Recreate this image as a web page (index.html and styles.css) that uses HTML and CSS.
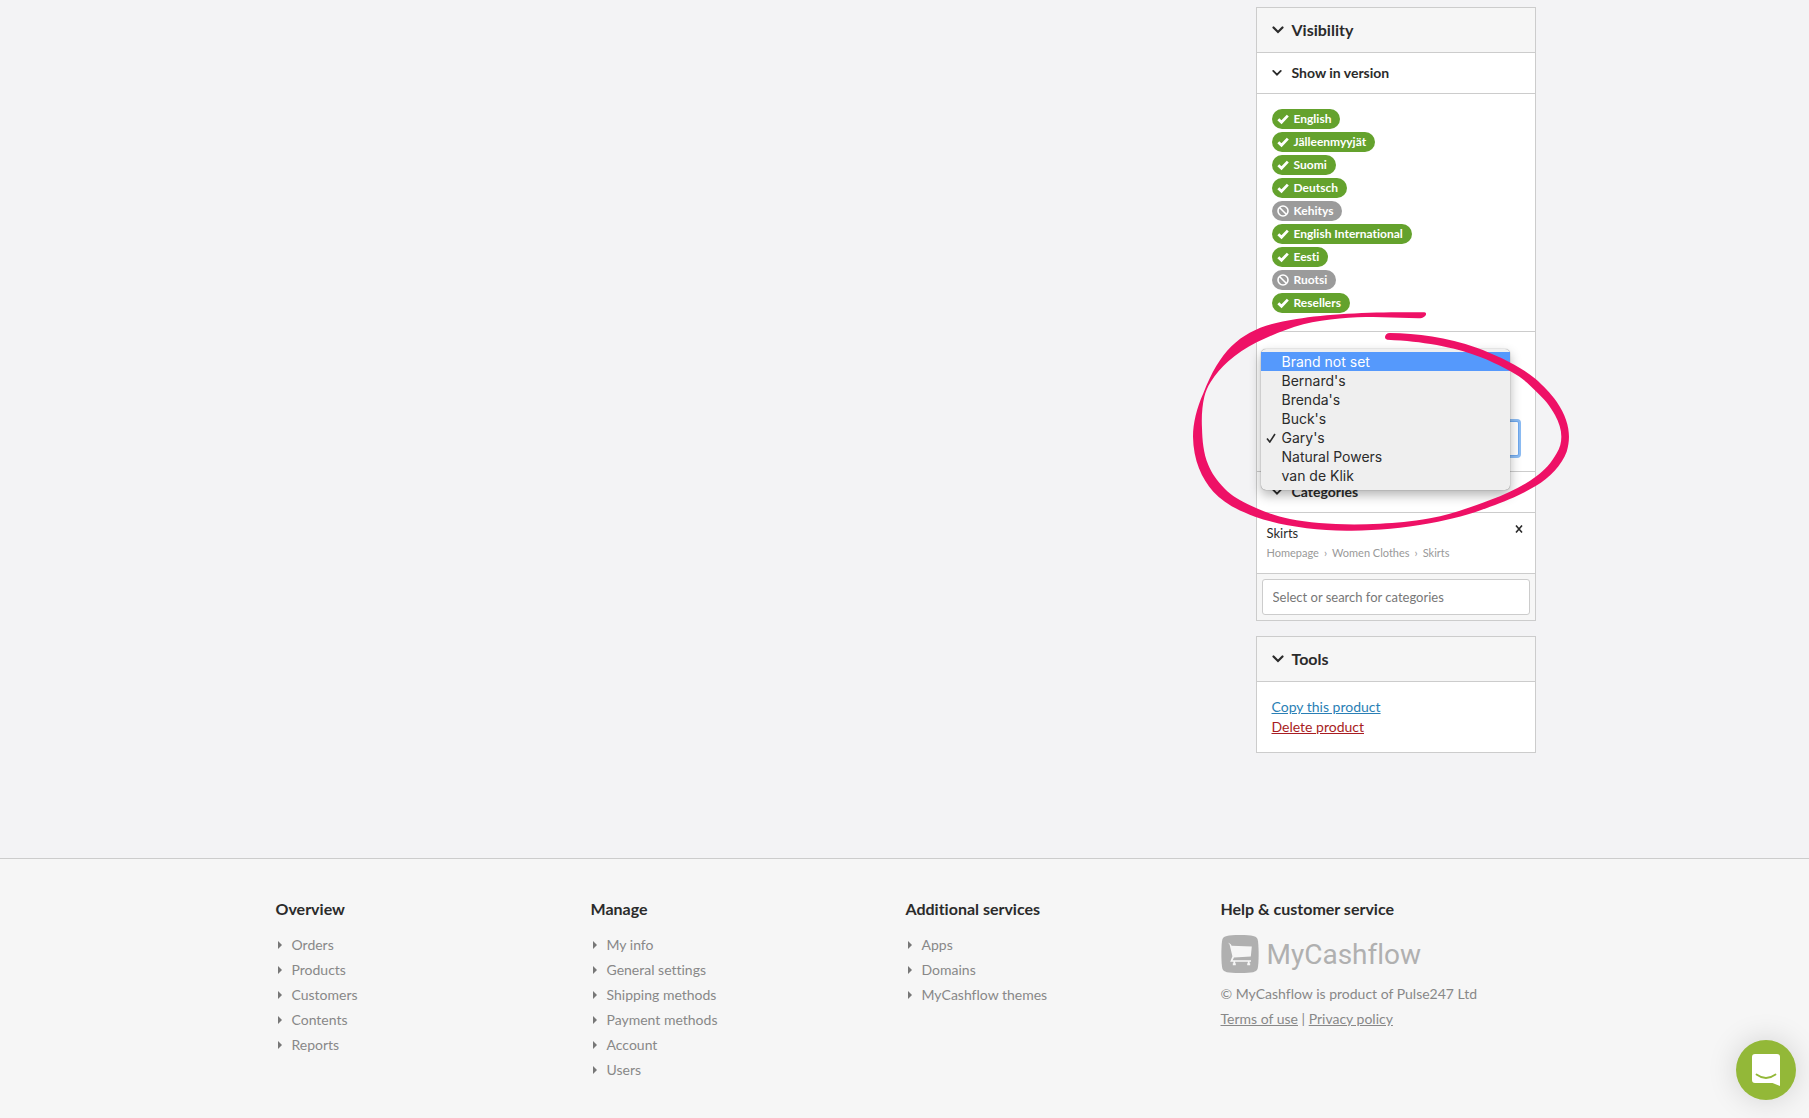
FILE: index.html
```
<!DOCTYPE html>
<html lang="en">

<head>
  <meta charset="utf-8">
  <title>MyCashflow</title>
  <link rel="stylesheet" href="styles.css">
</head>

<body>
  <svg class="sprite" aria-hidden="true">
    <symbol id="chevron" viewBox="0 0 12 8">
      <path d="M1.500 1.500 6 6l4.500-4.500" fill="none" stroke="currentColor" stroke-width="2.200" stroke-linecap="round" />
    </symbol>
    <symbol id="check" viewBox="0 0 12 10">
      <path d="M1.300 5.200 4.500 8.200 10.800 1.600" fill="none" stroke="currentColor" stroke-width="2.800" />
    </symbol>
    <symbol id="ban" viewBox="0 0 12 12">
      <circle cx="6" cy="6" r="5" fill="none" stroke="currentColor" stroke-width="1.600" />
      <path d="M2.500 2.500l7 7" stroke="currentColor" stroke-width="1.600" />
    </symbol>
  </svg>

  <main class="page">
    <aside class="sidebar">
      <section class="panel">
        <h2 class="panel-title"><button type="button"><svg class="chevron"><use href="#chevron" /></svg>Visibility</button></h2>
        <h3 class="panel-subtitle"><button type="button"><svg class="chevron small"><use href="#chevron" /></svg>Show in version</button></h3>
        <ul class="versions">
          <li class="pill"><svg class="check"><use href="#check" /></svg>English</li>
          <li class="pill"><svg class="check"><use href="#check" /></svg>Jälleenmyyjät</li>
          <li class="pill"><svg class="check"><use href="#check" /></svg>Suomi</li>
          <li class="pill"><svg class="check"><use href="#check" /></svg>Deutsch</li>
          <li class="pill off"><svg class="ban"><use href="#ban" /></svg>Kehitys</li>
          <li class="pill"><svg class="check"><use href="#check" /></svg>English International</li>
          <li class="pill"><svg class="check"><use href="#check" /></svg>Eesti</li>
          <li class="pill off"><svg class="ban"><use href="#ban" /></svg>Ruotsi</li>
          <li class="pill"><svg class="check"><use href="#check" /></svg>Resellers</li>
        </ul>

        <div class="brand">
          <select class="brand-select" aria-label="Brand">
            <option>Gary's</option>
          </select>
          <ul class="menu" role="listbox" aria-label="Brand">
            <li class="active" role="option">Brand not set</li>
            <li role="option">Bernard's</li>
            <li role="option">Brenda's</li>
            <li role="option">Buck's</li>
            <li role="option" aria-selected="true"><svg class="tick" viewBox="0 0 10 10"><path d="M1 5.500 3.800 9 9 1" fill="none" stroke="currentColor" stroke-width="1.600" /></svg>Gary's</li>
            <li role="option">Natural Powers</li>
            <li role="option">van de Klik</li>
          </ul>
          <!-- hand-drawn ring around the menu -->
          <svg class="ring" viewBox="0 0 1200 720" aria-hidden="true">
            <path d="M733 37C600 35 450 40 350 57C205 78 130 125 70 280C50 325 39 370 39 410C40 480 65 535 100 575C130 608 175 632 225 650C300 677 400 692 500 692C590 693 660 685 750 670C820 657 880 640 930 620C985 600 1025 583 1067 558C1110 533 1145 495 1160 455C1174 410 1168 360 1130 305C1110 277 1090 258 1067 237C1020 198 950 165 890 143C800 112 710 100 630 99C614 99 610 117 622 119C680 122 720 126 770 135C820 145 850 153 890 167C930 181 960 197 990 213C1025 232 1045 250 1067 273C1095 299 1110 318 1125 345C1137 368 1144 388 1144 410C1144 428 1140 443 1130 460C1115 487 1095 511 1067 530C1030 558 985 580 930 600C880 618 820 642 750 655C690 665 650 669 600 671C490 677 400 670 330 657C285 647 250 635 215 618C180 602 155 587 135 567C110 541 95 520 85 495C70 460 67 420 66 385C64 350 67 315 73 290C77 275 82 262 92 246C107 223 124 203 145 184C170 162 198 143 230 127C275 105 320 87 370 73C440 55 520 51 580 51L715 55C735 56 745 39 733 37Z" fill="#ee1166" />
          </svg>
        </div>

        <h3 class="panel-subtitle"><button type="button"><svg class="chevron small"><use href="#chevron" /></svg>Categories</button></h3>
        <div class="category">
          <div>
            <p class="category-name">Skirts</p>
            <p class="category-path"><span>Homepage</span><span>›</span><span>Women Clothes</span><span>›</span><span>Skirts</span></p>
          </div>
          <button type="button" class="remove" aria-label="Remove">
            <svg viewBox="0 0 8 8"><path d="M1 .5l6 7M7 .5l-6 7" stroke="currentColor" stroke-width="1.600" /></svg>
          </button>
        </div>
        <div class="category-search">
          <input type="text" placeholder="Select or search for categories" aria-label="Select or search for categories">
        </div>
      </section>

      <section class="panel">
        <h2 class="panel-title"><button type="button"><svg class="chevron"><use href="#chevron" /></svg>Tools</button></h2>
        <div class="tools">
          <a href="#">Copy this product</a>
          <a href="#" class="danger">Delete product</a>
        </div>
      </section>
    </aside>
  </main>

  <footer class="footer">
    <div class="footer-inner">
      <nav>
        <h4>Overview</h4>
        <ul>
          <li><a href="#">Orders</a></li>
          <li><a href="#">Products</a></li>
          <li><a href="#">Customers</a></li>
          <li><a href="#">Contents</a></li>
          <li><a href="#">Reports</a></li>
        </ul>
      </nav>
      <nav>
        <h4>Manage</h4>
        <ul>
          <li><a href="#">My info</a></li>
          <li><a href="#">General settings</a></li>
          <li><a href="#">Shipping methods</a></li>
          <li><a href="#">Payment methods</a></li>
          <li><a href="#">Account</a></li>
          <li><a href="#">Users</a></li>
        </ul>
      </nav>
      <nav>
        <h4>Additional services</h4>
        <ul>
          <li><a href="#">Apps</a></li>
          <li><a href="#">Domains</a></li>
          <li><a href="#">MyCashflow themes</a></li>
        </ul>
      </nav>
      <div class="help">
        <h4>Help &amp; customer service</h4>
        <div class="logo">
          <svg viewBox="0 0 38 38">
            <path d="M19 0C32 0 35 1 36.500 4C38 8 38 30 36.500 34C35 37 32 38 19 38S3 37 1.500 34C0 30 0 8 1.500 4C3 1 6 0 19 0Z" fill="#b0b0b0" />
            <path d="M7 7.500 9.800 9.300 10.600 10.800 30.800 11.600 29.800 21.600 13 22.400 11.600 25.200H30V26.800H28.600V28.300H29.200V30.300H26.200V28.300H26.800V26.800H14.200V28.300H14.800V30.300H11.800V28.300H12.400V26.800H9.200L11.400 21.200 8.600 9.600Z" fill="#f6f6f6" />
          </svg>
          <span>MyCashflow</span>
        </div>
        <p>© MyCashflow is product of Pulse247 Ltd</p>
        <p><a href="#">Terms of use</a> | <a href="#">Privacy policy</a></p>
      </div>
    </div>
  </footer>

  <button type="button" class="chat" aria-label="Chat">
    <svg viewBox="0 0 28 32">
      <path d="M3 0H25Q28 0 28 3V32L20.500 29H3Q0 29 0 26V3Q0 0 3 0Z" fill="#fff" />
      <path d="M4.500 20.500Q14 27.500 23.500 20.500" fill="none" stroke="#93b838" stroke-width="1.800" stroke-linecap="round" />
    </svg>
  </button>
</body>

</html>
```
FILE: styles.css
```
* {
  box-sizing: border-box;
}

body {
  margin: 0;
  min-height: 100vh;
  display: flex;
  flex-direction: column;
  background: #f3f3f5;
  color: #2b2b2b;
  font-family: Lato, sans-serif;
  font-size: 14px;
  font-variant-ligatures: none;
  line-height: 20px;
}

h2,
h3,
h4,
p,
ul {
  margin: 0;
  padding: 0;
}

ul {
  list-style: none;
}

button {
  font: inherit;
  color: inherit;
  background: none;
  border: 0;
  padding: 0;
  cursor: pointer;
}

.sprite {
  display: none;
}

.page {
  width: 100%;
  max-width: 1262px;
  margin: 0 auto;
  padding: 7px 0 105px;
  display: flex;
  justify-content: flex-end;
}

.sidebar {
  width: 280px;
  display: flex;
  flex-direction: column;
  gap: 15px;
}

.panel {
  background: #fff;
  border: 1px solid #ccc;
}

.panel-title,
.panel-subtitle {
  border-bottom: 1px solid #ccc;
  font-weight: 700;
}

.panel-title {
  background: #f6f6f6;
  font-size: 16px;
}

.panel-subtitle {
  font-size: 14px;
}

.panel-title button,
.panel-subtitle button {
  width: 100%;
  padding: 10px 15px;
  display: flex;
  align-items: center;
  text-align: left;
}

.panel-title button {
  padding: 12px 15px;
}

.chevron {
  width: 12px;
  height: 8px;
  margin-right: 8px;
}

.chevron.small {
  width: 10px;
  margin-right: 10px;
}

.versions {
  padding: 15px 15px 18px;
  display: flex;
  flex-direction: column;
  align-items: flex-start;
  gap: 3px;
  border-bottom: 1px solid #ccc;
}

.pill {
  display: flex;
  align-items: center;
  gap: 5px;
  height: 20px;
  padding: 0 9px 0 5px;
  border-radius: 10px;
  background: #64a22d;
  color: #fff;
  font-size: 12px;
  font-weight: 700;
}

.pill.off {
  background: #9b9b9b;
}

.pill svg {
  width: 12px;
  height: 12px;
}

.brand {
  position: relative;
  height: 140px;
  padding: 15px 16px;
  display: flex;
  align-items: flex-end;
  border-bottom: 1px solid #ccc;
}

.brand-select {
  width: 100%;
  height: 35px;
  padding: 0 8px;
  appearance: none;
  border: 1px solid #6ea8ee;
  border-radius: 2px;
  box-shadow: 0 0 0 2px #8cbcf3;
  background: #fff;
  color: inherit;
  font: inherit;
}

.menu {
  position: absolute;
  top: 17px;
  left: 4px;
  right: 25px;
  z-index: 1;
  padding: 3px 0 5px;
  border-radius: 5px;
  background: #efefef;
  box-shadow: 0 0 1px rgba(0, 0, 0, 0.6), 0 5px 12px rgba(0, 0, 0, 0.3);
  font-family: Inter, sans-serif;
  font-size: 14px;
  line-height: 19px;
}

.menu li {
  position: relative;
  padding-left: 21px;
}

.menu .active {
  background: #5599fc;
  color: #fff;
}

.tick {
  position: absolute;
  left: 5px;
  top: 5px;
  width: 10px;
  height: 10px;
}

.ring {
  position: absolute;
  z-index: 2;
  left: -77px;
  top: -32px;
  width: 400px;
  height: 240px;
  pointer-events: none;
}

.category {
  display: flex;
  justify-content: space-between;
  padding: 10px;
  border-bottom: 1px solid #ccc;
}

.category-name {
  font-size: 13px;
}

.category-path {
  display: flex;
  gap: 5px;
  color: #999;
  font-size: 11px;
}

.remove {
  align-self: flex-start;
  width: 12px;
  height: 12px;
}

.remove svg {
  display: block;
  width: 8px;
  height: 8px;
  margin: 0 2px;
}

.category-search {
  padding: 5px;
  background: #f6f6f6;
}

.category-search input {
  display: block;
  width: 100%;
  height: 36px;
  padding: 0 10px;
  border: 1px solid #ccc;
  border-radius: 3px;
  background: #fff;
  font: inherit;
  font-size: 13px;
}

.category-search input::placeholder {
  color: #777;
}

.tools {
  padding: 15px;
  display: flex;
  flex-direction: column;
  align-items: flex-start;
}

.tools a {
  color: #2a7fb5;
}

.tools .danger {
  color: #a81c22;
}

.footer {
  flex: 1;
  padding: 37px 20px 24px 22px;
  border-top: 1px solid #ccc;
  background: #f6f6f6;
  color: #888;
  line-height: 25px;
}

.footer-inner {
  max-width: 1260px;
  margin: 0 auto;
  display: grid;
  grid-template-columns: repeat(4, 1fr);
}

.footer h4 {
  margin-bottom: 11px;
  color: #2b2b2b;
  font-size: 16px;
  font-weight: 700;
}

.footer a {
  color: inherit;
}

.footer li {
  display: flex;
  align-items: center;
}

.footer li::before {
  content: "";
  margin: 0 10px 0 2px;
  border: solid transparent;
  border-width: 4px 0 4px 4px;
  border-left-color: #777;
}

.footer li a {
  text-decoration: none;
}

.logo {
  display: flex;
  align-items: center;
  gap: 8px;
  height: 40px;
  margin: 13px 0 7px;
  color: #b0b0b0;
  font-family: Roboto, sans-serif;
  font-size: 28px;
}

.logo svg {
  width: 38px;
  height: 38px;
}

.chat {
  position: fixed;
  right: 13px;
  bottom: 18px;
  width: 60px;
  height: 60px;
  display: flex;
  align-items: center;
  justify-content: center;
  border-radius: 50%;
  background: #93b838;
  box-shadow: 0 0 30px rgba(0, 0, 0, 0.15);
}

.chat svg {
  width: 28px;
  height: 32px;
}
```
